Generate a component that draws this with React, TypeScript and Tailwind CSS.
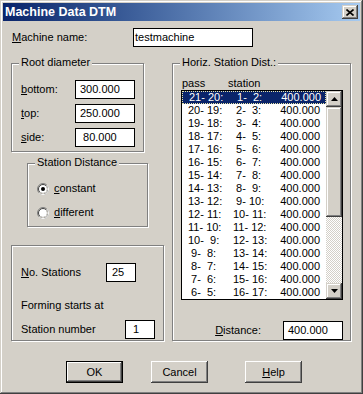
import type { ReactNode } from 'react';

const raised =
  'bg-[#d4d0c8] shadow-[inset_-1px_-1px_#404040,inset_1px_1px_#ffffff,inset_-2px_-2px_#808080,inset_2px_2px_#d4d0c8]';
const raisedSmall =
  'bg-[#d4d0c8] shadow-[inset_-1px_-1px_#404040,inset_1px_1px_#d4d0c8,inset_-2px_-2px_#808080,inset_2px_2px_#ffffff]';

function pad(n: number, w: number) {
  return String(n).padStart(w, ' ');
}

const rows = Array.from({ length: 16 }, (_, i) => ({
  pass: `${pad(21 - i, 2)}-${pad(20 - i, 3)}:`,
  station: `${pad(i + 1, 2)}-${pad(i + 2, 3)}:`,
  value: '400.000',
}));

function Group({ label, className, children }: { label: string; className: string; children?: ReactNode }) {
  return (
    <div
      className={`relative border border-[#808080] shadow-[inset_1px_1px_0_#ffffff,1px_1px_0_#ffffff] ${className}`}
    >
      <span className="absolute -top-[8px] left-[7px] bg-[#d4d0c8] px-[2px] leading-[13px]">{label}</span>
      {children}
    </div>
  );
}

function Field({ className, children }: { className: string; children: ReactNode }) {
  return (
    <div className={`h-[19px] border border-black bg-white leading-[17px] whitespace-pre ${className}`}>
      {children}
    </div>
  );
}

function Radio({ checked }: { checked?: boolean }) {
  return (
    <svg width="12" height="12" viewBox="0 0 12 12" className="shrink-0">
      <circle cx="6" cy="6" r="5.5" fill="none" stroke="#808080" />
      <path d="M9.89 2.11 A5.5 5.5 0 0 1 2.11 9.89" fill="none" stroke="#ffffff" />
      <circle cx="6" cy="6" r="4.5" fill="#ffffff" stroke="#404040" />
      <path d="M9.18 2.82 A4.5 4.5 0 0 1 2.82 9.18" fill="none" stroke="#d4d0c8" />
      {checked && <circle cx="6" cy="6" r="2" fill="#000000" />}
    </svg>
  );
}

function Arrow({ down }: { down?: boolean }) {
  return (
    <div className={`flex h-[16px] w-[16px] items-center justify-center ${raisedSmall}`}>
      <svg width="7" height="4" viewBox="0 0 7 4">
        <polygon points={down ? '0,0 7,0 3.5,4' : '3.5,0 7,4 0,4'} fill="#000000" />
      </svg>
    </div>
  );
}

function Button({ children, isDefault, className }: { children: ReactNode; isDefault?: boolean; className: string }) {
  return (
    <div className={`h-[22px] w-[57px] ${isDefault ? 'border border-black' : ''} ${className}`}>
      <div className={`flex h-full w-full items-center justify-center ${raised}`}>{children}</div>
    </div>
  );
}

export default function App() {
  return (
    <div className="h-[394px] w-[363px] bg-[#d4d0c8] p-[3px] font-['Liberation_Sans',Arial,sans-serif] text-[11px] leading-[13px] text-black shadow-[inset_-1px_-1px_#404040,inset_1px_1px_#d4d0c8,inset_-2px_-2px_#808080,inset_2px_2px_#ffffff]">
      {/* Title bar */}
      <div className="flex h-[18px] items-center justify-between bg-gradient-to-r from-[#0a246a] to-[#a6caf0] pl-[2px] pr-[2px]">
        <span className="text-[12.5px] font-bold text-white">Machine Data DTM</span>
        <div className={`flex h-[14px] w-[16px] items-center justify-center ${raisedSmall}`}>
          <svg width="8" height="7" viewBox="0 0 8 7">
            <path d="M0.5 0.5 L7.5 6.5 M7.5 0.5 L0.5 6.5" stroke="#000000" strokeWidth="1.6" />
          </svg>
        </div>
      </div>

      {/* Machine name */}
      <div className="mt-[7px] flex items-center pl-[9px]">
        <span className="w-[121px]">
          <u>M</u>achine name:
        </span>
        <Field className="w-[120px] pl-[1px]">testmachine</Field>
      </div>

      <div className="mt-[16px] flex pl-[8px]">
        {/* Left column */}
        <div className="flex w-[153px] flex-col">
          <Group label="Root diameter" className="h-[89px] w-[133px]">
            <div className="flex flex-col gap-[5px] pt-[16px]">
              {[
                ['b', 'ottom:', '300.000'],
                ['t', 'op:', '250.000'],
                ['s', 'ide:', ' 80.000'],
              ].map(([k, rest, v]) => (
                <div key={k} className="flex items-center pl-[9px]">
                  <span className="w-[54px]">
                    <u>{k}</u>
                    {rest}
                  </span>
                  <Field className="w-[60px] pl-[4px]">{v}</Field>
                </div>
              ))}
            </div>
          </Group>

          <Group label="Station Distance" className="ml-[16px] mt-[11px] h-[64px] w-[121px]">
            <div className="flex flex-col gap-[11px] pl-[9px] pt-[18px]">
              <div className="flex h-[13px] items-center gap-[5px]">
                <Radio checked />
                <span>
                  <u>c</u>onstant
                </span>
              </div>
              <div className="flex h-[13px] items-center gap-[5px]">
                <Radio />
                <span>
                  <u>d</u>ifferent
                </span>
              </div>
            </div>
          </Group>

          <div className="relative mt-[18px] h-[96px] w-[153px] border border-[#808080] shadow-[inset_1px_1px_0_#ffffff,1px_1px_0_#ffffff]">
            <div className="flex flex-col pl-[9px] pt-[17px]">
              <div className="flex items-center">
                <span className="w-[85px]">
                  <u>N</u>o. Stations
                </span>
                <Field className="w-[30px] pl-[5px]">25</Field>
              </div>
              <div className="mt-[17px] h-[13px]">Forming starts at</div>
              <div className="mt-[8px] flex items-center">
                <span className="w-[104px]">Station number</span>
                <Field className="w-[30px] pl-[4px]">{' 1'}</Field>
              </div>
            </div>
          </div>
        </div>

        {/* Right column */}
        <Group label="Horiz. Station Dist.:" className="ml-[8px] h-[278px] w-[179px]">
          <div className="mt-[13px] flex h-[13px] pl-[9px]">
            <span className="w-[46px]">pass</span>
            <span>station</span>
          </div>
          <div className="ml-[8px] flex h-[210px] w-[162px] border border-black bg-white">
            <div className="flex w-[144px] flex-col">
              {rows.map((r, i) => (
                <div
                  key={i}
                  className={`flex h-[13px] shrink-0 items-center whitespace-pre pl-[6px] ${
                    i === 0 ? 'border border-dotted border-[#e8e4a8] bg-[#0a246a] pl-[5px] text-white' : ''
                  }`}
                >
                  <span className="w-[45px]">{r.pass}</span>
                  <span className="w-[40px]">{r.station}</span>
                  <span className="w-[47px] text-right">{r.value}</span>
                </div>
              ))}
            </div>
            <div className="flex w-[16px] flex-col">
              <Arrow />
              <div className={`h-[110px] ${raisedSmall}`} />
              <div className="flex-1 bg-[repeating-conic-gradient(#d4d0c8_0_25%,#ffffff_0_50%)] bg-[length:2px_2px]" />
              <Arrow down />
            </div>
          </div>
          <div className="mr-[7px] mt-[21px] flex items-center justify-end gap-[22px]">
            <span>
              <u>D</u>istance:
            </span>
            <Field className="w-[60px] pl-[4px]">400.000</Field>
          </div>
        </Group>
      </div>

      {/* Buttons */}
      <div className="mt-[20px] flex pl-[63px]">
        <Button isDefault className="">
          OK
        </Button>
        <Button className="ml-[28px]">Cancel</Button>
        <Button className="ml-[37px]">
          <span>
            <u>H</u>elp
          </span>
        </Button>
      </div>
    </div>
  );
}
